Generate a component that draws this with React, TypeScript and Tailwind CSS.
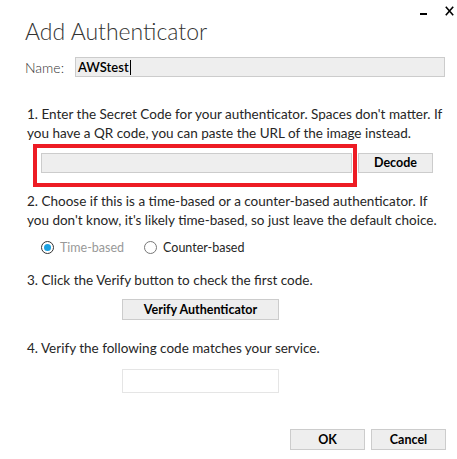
export default function App() {
  return (
    <div className="relative h-[459px] w-[457px] overflow-hidden bg-white font-['Lato','Open_Sans',sans-serif] text-[#262626]">
      {/* window chrome */}
      <div className="absolute right-[3px] top-[6px] flex items-start gap-[18px]">
        <span className="mt-[7px] block h-[2px] w-[7px] bg-black" />
        <svg width="9" height="10" viewBox="0 0 9 10" aria-hidden>
          <path d="M0.8 0.8L8.2 9.2M8.2 0.8L0.8 9.2" stroke="#000" strokeWidth="1.6" />
        </svg>
      </div>

      <div className="flex flex-col pl-[27px]">
        <h1 className="-ml-[2px] mt-[15px] text-[23px] font-light leading-[32px] text-[#333]">
          Add Authenticator
        </h1>

        <div className="-ml-[2px] mt-[10px] flex h-[20px] items-center">
          <span className="w-[50px] pt-[2px] text-[14px] font-light leading-[20px] text-[#333]">Name:</span>
          <div className="flex h-[20px] w-[370px] items-center border border-[#cccccc] bg-[#eeeeee] pl-[2px] text-[13px] font-semibold leading-[18px] text-black">
            AWStest
            <span className="ml-px h-[15px] w-px bg-black" />
          </div>
        </div>

        <p className="mt-[28px] text-[13.5px] leading-[19px]">
          1. Enter the Secret Code for your authenticator. Spaces don't matter. If
          <br />
          you have a QR code, you can paste the URL of the image instead.
        </p>

        <div className="relative ml-[14px] mt-[10px] flex h-[20px] gap-[6px]">
          <div className="h-[20px] w-[311px] border border-[#cccccc] bg-[#eeeeee]" />
          <button
            type="button"
            className="h-[20px] w-[75px] border border-[#cccccc] bg-[#eeeeee] text-[12.5px] font-bold leading-[18px] text-black"
          >
            Decode
          </button>
          {/* red highlight annotation */}
          <div className="pointer-events-none absolute -left-[8px] -top-[9px] h-[43px] w-[324px] border-[4px] border-[#ed1c24]" />
        </div>

        <p className="mt-[19px] text-[13.5px] leading-[19px]">
          2. Choose if this is a time-based or a counter-based authenticator. If
          <br />
          you don't know, it's likely time-based, so just leave the default choice.
        </p>

        <div className="ml-[14px] mt-[8px] flex h-[19px] items-center text-[12.5px] leading-[19px]">
          <span className="flex h-[13px] w-[13px] items-center justify-center rounded-full border border-[#333]">
            <span className="h-[7px] w-[7px] rounded-full bg-[#1ba1e2]" />
          </span>
          <span className="ml-[6px] text-[#999]">Time-based</span>
          <span className="ml-[20px] h-[13px] w-[13px] rounded-full border border-[#777]" />
          <span className="ml-[6px]">Counter-based</span>
        </div>

        <p className="mt-[14px] text-[13.5px] leading-[19px]">3. Click the Verify button to check the first code.</p>

        <button
          type="button"
          className="ml-[95px] mt-[9px] h-[21px] w-[157px] border border-[#cccccc] bg-[#eeeeee] text-[12.5px] font-bold leading-[19px] text-black"
        >
          Verify Authenticator
        </button>

        <p className="mt-[19px] text-[13.5px] leading-[19px]">4. Verify the following code matches your service.</p>

        <div className="ml-[95px] mt-[11px] h-[24px] w-[157px] border border-[#e5e5e5] bg-white" />

        <div className="mt-[36px] flex justify-end gap-[6px] pr-[11px]">
          <button
            type="button"
            className="h-[21px] w-[75px] border border-[#cccccc] bg-[#eeeeee] text-[12.5px] font-bold leading-[19px] text-black"
          >
            OK
          </button>
          <button
            type="button"
            className="h-[21px] w-[75px] border border-[#cccccc] bg-[#eeeeee] text-[12.5px] font-bold leading-[19px] text-black"
          >
            Cancel
          </button>
        </div>
      </div>
    </div>
  );
}
